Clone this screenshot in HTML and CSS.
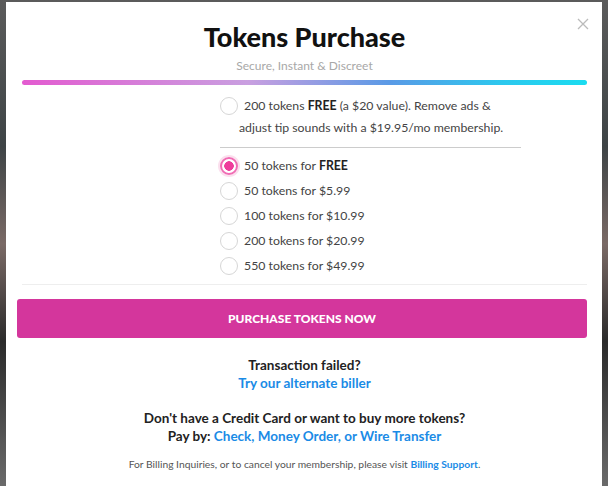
FILE: index.html
```html
<!doctype html>
<html lang="en">
<head>
  <meta charset="UTF-8">
  <title>Tokens Purchase</title>
  <link rel="stylesheet" href="styles.css">
</head>
<body>
  <div class="backdrop">
    <div class="modal">
      <a class="close" href="javascript:;">
        <svg width="12" height="12" viewBox="0 0 12 12"><path d="M1 1L11 11M11 1L1 11" stroke="#bbb" stroke-width="1.3" fill="none"/></svg>
      </a>
      <div class="head">
        <h1>Tokens Purchase</h1>
        <p class="sub">Secure, Instant &amp; Discreet</p>
      </div>
      <div class="bar"></div>

      <div class="options">
        <label class="opt member">
          <span class="radio"></span>200 tokens <b>FREE</b> <span>(a $20 value). Remove ads &amp;</span><br><span>adjust tip sounds with a $19.95/mo membership.</span>
        </label>
        <div class="list">
          <label class="opt"><span class="radio on"></span>50 tokens for <b>FREE</b></label>
          <label class="opt"><span class="radio"></span>50 tokens for $5.99</label>
          <label class="opt"><span class="radio"></span>100 tokens for $10.99</label>
          <label class="opt"><span class="radio"></span>200 tokens for $20.99</label>
          <label class="opt"><span class="radio"></span>550 tokens for $49.99</label>
        </div>
      </div>

      <div class="foot">
        <a class="buy" href="javascript:;">PURCHASE TOKENS NOW</a>
        <p class="note">Transaction failed?<br><a href="javascript:;">Try our alternate biller</a></p>
        <p class="note">Don't have a Credit Card or want to buy more tokens?<br>Pay by: <a href="javascript:;">Check, Money Order, or Wire Transfer</a></p>
        <p class="small">For Billing Inquiries, or to cancel your membership, please visit <a href="javascript:;">Billing Support</a>.</p>
      </div>
    </div>
  </div>
</body>
</html>
```

FILE: styles.css
```css
body, h1, p {
  margin: 0;
  padding: 0;
}

body {
  font-family: Lato, "Open Sans", sans-serif;
  background: #4d4d4d;
}

.backdrop {
  height: 486px;
  overflow: hidden;
  padding: 2px 6px 0 6px;
  background: linear-gradient(180deg, #5b5b5b 0%, #3e4446 30%, #7a6a66 50%, #2b2b2b 70%, #6b6b6b 100%);
}

.modal {
  position: relative;
  background: #fff;
  height: 500px;
  padding: 0 15px 0 16px;
}

.close {
  position: absolute;
  right: 13px;
  top: 16px;
  line-height: 0;
}

.head {
  text-align: center;
  padding-top: 19px;
}

.head h1 {
  font-size: 27px;
  line-height: 32px;
  font-weight: 900;
  color: #111;
}

.head .sub {
  font-size: 12px;
  line-height: 16px;
  margin-top: 5px;
  color: #a8a8a8;
}

.bar {
  height: 5px;
  margin-top: 6px;
  border-radius: 3px;
  background: linear-gradient(90deg, #e35bd0 0%, #c99fe0 40%, #5a9ae6 65%, #2cc8ee 85%, #1adcf0 100%);
}

.options {
  width: 301px;
  margin: 10px 0 0 198px;
  color: #444;
  font-size: 12.3px;
}

.opt {
  display: block;
  padding-left: 19px;
  line-height: 25px;
}

.opt b {
  color: #222;
}

.member {
  line-height: 22px;
  padding-bottom: 8px;
  border-bottom: 1px solid #ccc;
}

.radio {
  display: inline-block;
  box-sizing: border-box;
  width: 18px;
  height: 18px;
  margin: 0 6px 0 -19px;
  vertical-align: -5px;
  border: 1px solid #d6d6d6;
  border-radius: 50%;
  background: #fff;
}

.radio.on {
  border: 2px solid #f06cb4;
  box-shadow: 0 0 0 2px #fbe0ee;
  background: radial-gradient(circle, #ee3d9c 0, #ee3d9c 4.5px, #fff 5px);
}

.list {
  padding-top: 5px;
}

.foot {
  margin-top: 6px;
  border-top: 1px solid #eee;
  padding: 14px 0 0 0;
  text-align: center;
}

.buy {
  display: block;
  margin: 0 0 0 -5px;
  height: 39px;
  line-height: 39px;
  border-radius: 3px;
  background: #d4369c;
  color: #fff;
  font-size: 12px;
  font-weight: 900;
  text-decoration: none;
}

.note {
  margin-top: 18px;
  font-size: 13.5px;
  line-height: 18px;
  font-weight: 700;
  color: #222;
}

.note + .note {
  margin-top: 17px;
}

.note a, .small a {
  color: #1a8be6;
  text-decoration: none;
  font-weight: 700;
}

.small {
  margin-top: 13px;
  font-size: 10.3px;
  color: #555;
}
```
